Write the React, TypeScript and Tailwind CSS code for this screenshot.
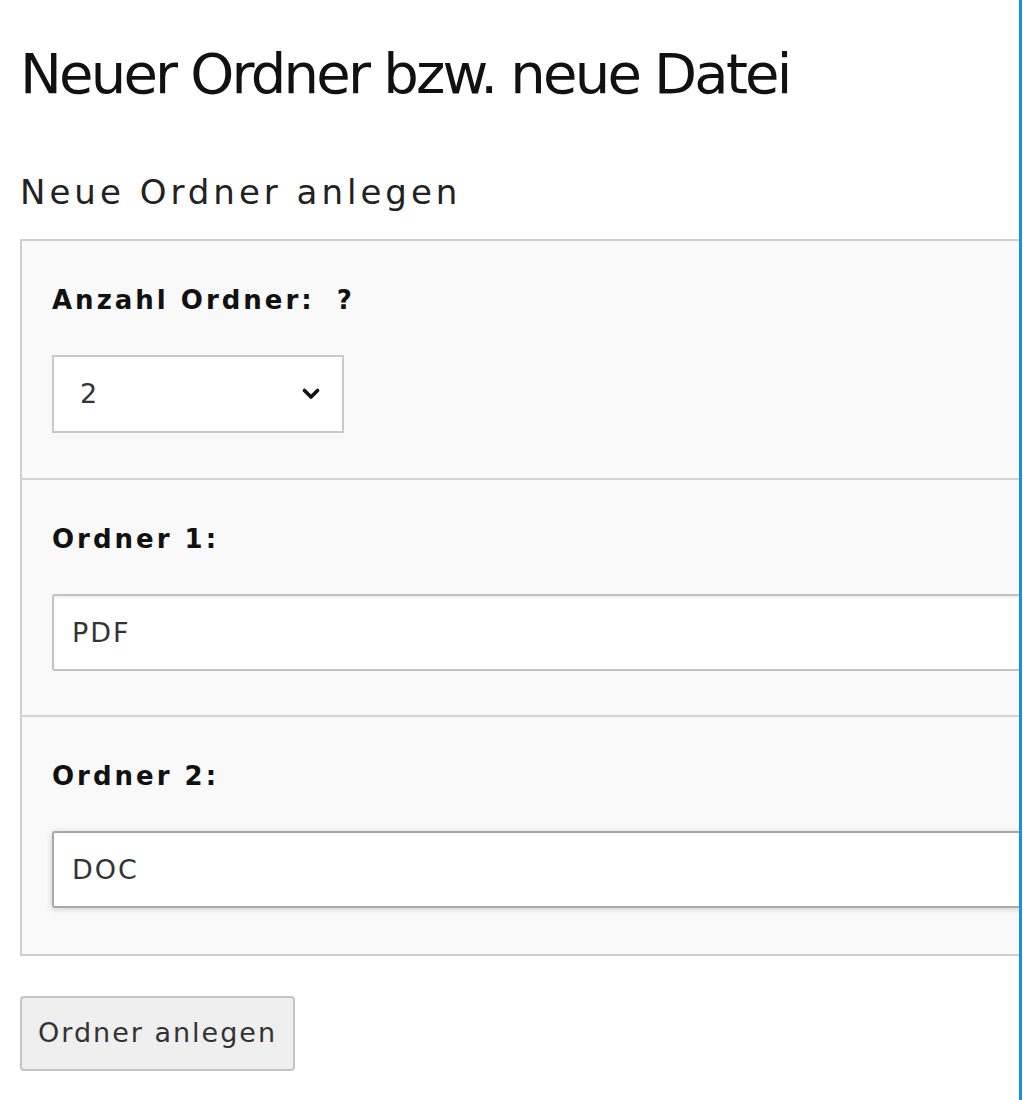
import { useState } from "react";

const verdana = "font-['DejaVu_Sans','Verdana',sans-serif]";

function Chevron() {
  return (
    <svg width="18" height="12" viewBox="0 0 18 12" className="shrink-0">
      <path
        d="M2.5 2.5 L9 9 L15.5 2.5"
        fill="none"
        stroke="#111"
        strokeWidth="3.6"
        strokeLinecap="round"
        strokeLinejoin="round"
      />
    </svg>
  );
}

export default function App() {
  const [count] = useState(2);
  const [folders, setFolders] = useState(["PDF", "DOC"]);

  return (
    <div className="flex w-[1024px] h-[1100px] bg-white overflow-hidden">
      <main className="w-[1019px] shrink-0 overflow-hidden pl-5">
        <h1 className="pt-[38px] h-[110px] text-[56px] leading-[72px] tracking-tighter text-[#111] font-['DejaVu_Sans',sans-serif] whitespace-nowrap">
          Neuer Ordner bzw. neue Datei
        </h1>

        <h2 className={`mt-[62px] text-[34px] leading-[40px] tracking-[4px] text-[#222] ${verdana}`}>
          Neue Ordner anlegen
        </h2>

        <div className={`mt-[27px] w-[1100px] border-2 border-[#cfcfcf] bg-[#f9f9f9] ${verdana}`}>
          <div className="pt-[41px] pb-[45px] pl-[30px]">
            <div className="flex items-center gap-[22px] h-[36px] text-[26px] tracking-[3px] font-bold text-[#111]">
              <span>Anzahl Ordner:</span>
              <span>?</span>
            </div>
            <div className="mt-[37px] flex items-center justify-between w-[292px] h-[78px] bg-white border-2 border-[#c9c9c9] pl-[26px] pr-[22px] text-[27px] text-[#333]">
              <span>{count}</span>
              <Chevron />
            </div>
          </div>

          {folders.map((f, i) => (
            <div
              key={i}
              className={`border-t-2 border-[#d4d4d4] pt-[41px] pl-[30px] ${i === 1 ? "pb-[46px]" : "pb-[44px]"}`}
            >
              <div className="h-[36px] flex items-center text-[26px] tracking-[3px] font-bold text-[#111]">
                Ordner {i + 1}:
              </div>
              <input
                value={f}
                onChange={(e) =>
                  setFolders(folders.map((x, j) => (j === i ? e.target.value : x)))
                }
                className={`mt-[37px] block w-[1040px] h-[77px] bg-white rounded-[3px] px-[18px] text-[27px] tracking-[2px] text-[#333] outline-none ${
                  i === 1
                    ? "border-2 border-[#a8a8a8] shadow-[0_1px_6px_rgba(0,0,0,0.18)]"
                    : "border-2 border-[#c2c2c2] shadow-[inset_0_2px_2px_rgba(0,0,0,0.06)]"
                }`}
              />
            </div>
          ))}
        </div>

        <button
          className={`mt-[40px] h-[75px] px-[16px] bg-[#efefef] border-2 border-[#c4c4c4] rounded-[4px] text-[27px] tracking-[2px] text-[#333] ${verdana}`}
        >
          Ordner anlegen
        </button>
      </main>
      <div className="w-[3px] h-full bg-[#1d8ce6]" />
      <div className="flex-1 bg-white" />
    </div>
  );
}
